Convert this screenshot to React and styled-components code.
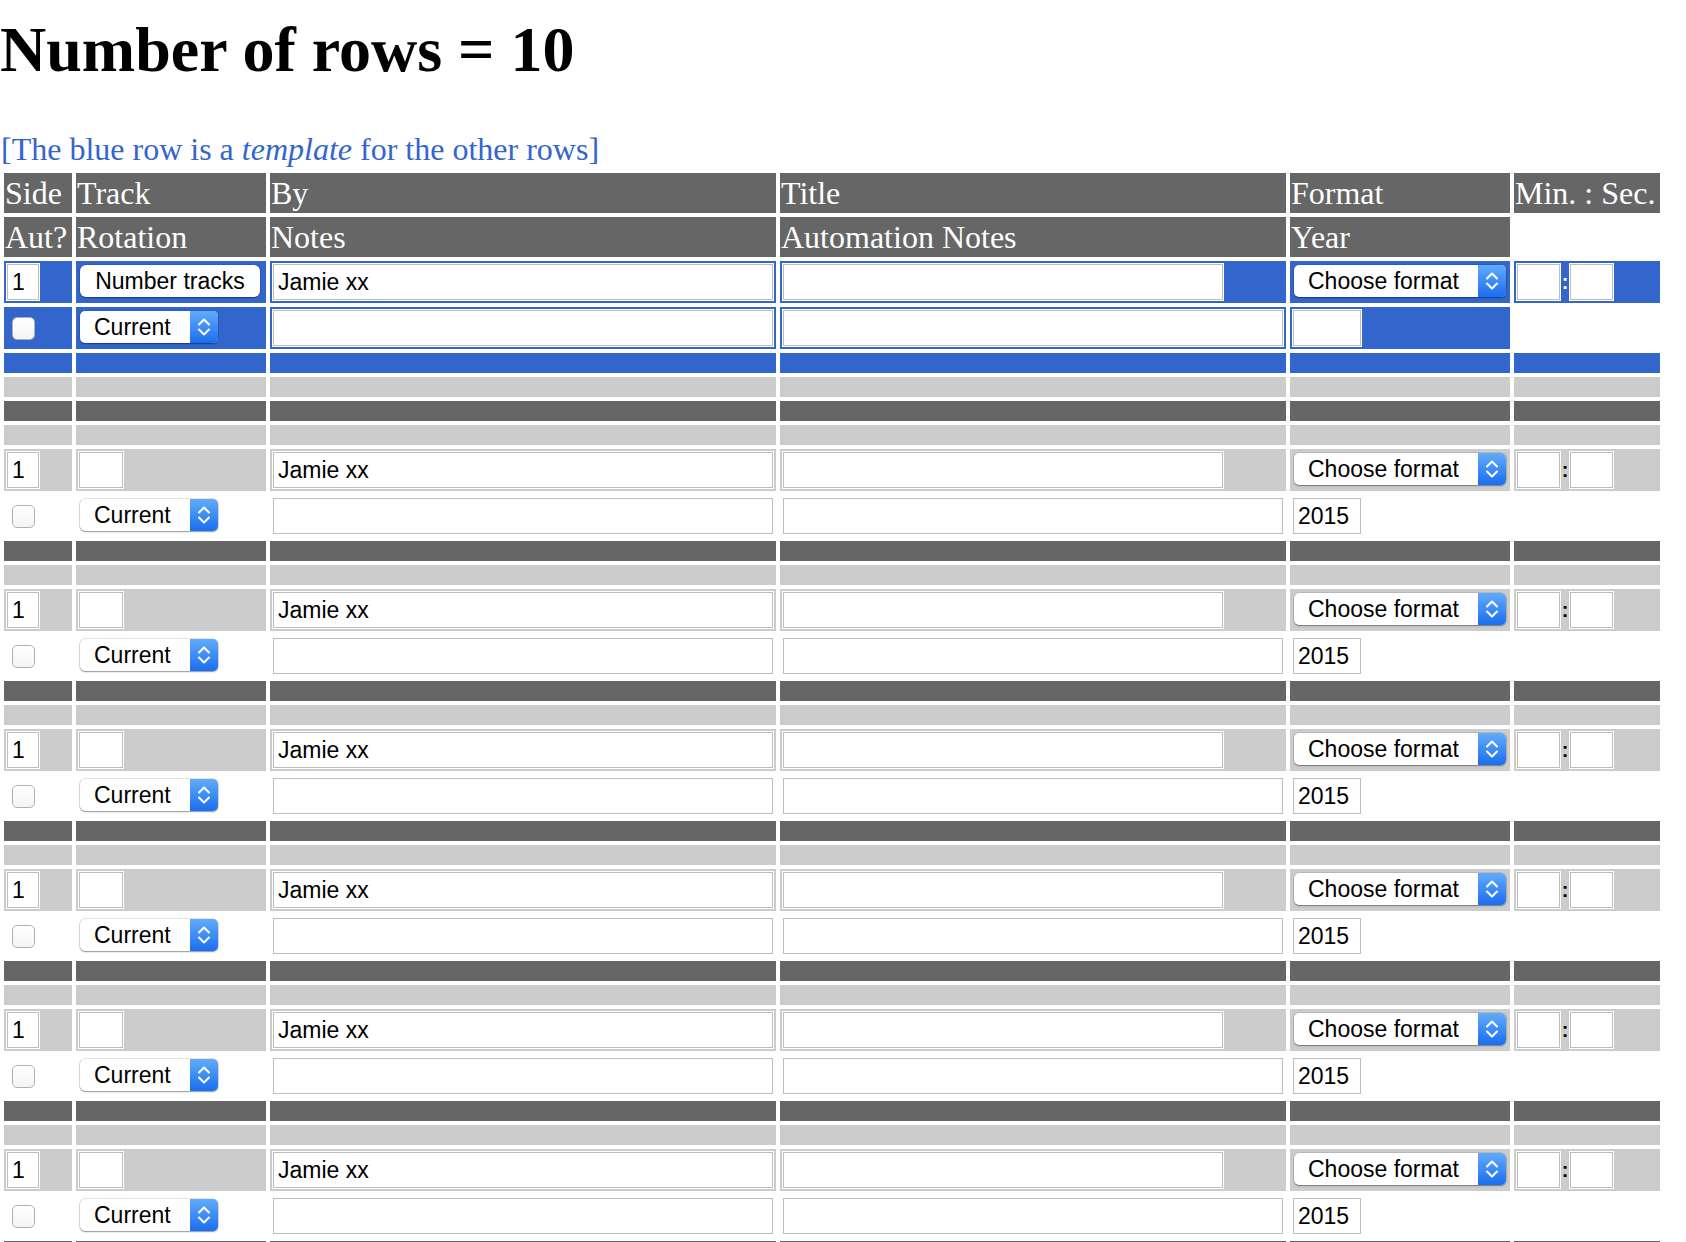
/**
 *
 * TrackRows
 *
 */

import React from 'react';
import styled, { createGlobalStyle } from 'styled-components';

const colors = {
  head: '#666666',
  light: '#cccccc',
  blue: '#3366cc',
  field: '#bdbdbd',
};

const tones = {
  head: colors.head,
  dark: colors.head,
  light: colors.light,
  blue: colors.blue,
  none: 'transparent',
};

const heights = { head: 40, field: 42, bar: 20 };

const GlobalStyle = createGlobalStyle`
  body {
    margin: 0;
    background: #fff;
    font-family: "Liberation Serif", "Times New Roman", serif;
  }
`;

const Heading = styled.h1`
  margin: 13px 0 44px;
  font-size: 64px;
  font-weight: bold;
  line-height: normal;
  color: #000;
`;

const Note = styled.p`
  margin: 0;
  padding: 0 0 1px 1px;
  font-size: 32px;
  line-height: normal;
  color: ${colors.blue};
`;

const Grid = styled.div`
  display: grid;
  grid-template-columns: 68px 190px 506px 506px 220px 146px;
  gap: 4px;
  padding: 4px;
  width: max-content;
`;

const Cell = styled.div`
  display: flex;
  align-items: center;
  box-sizing: border-box;
  height: ${p => heights[p.$size || 'field']}px;
  padding: 0 2px;
  background: ${p => tones[p.$tone || 'none']};
  color: ${p => (p.$tone === 'blue' ? '#fff' : '#000')};
`;

const HeadCell = styled(Cell)`
  padding: 0 1px;
  color: #fff;
  font-size: 32px;
  line-height: 38px;
  white-space: nowrap;
`;

const Field = styled.input`
  box-sizing: border-box;
  flex: ${p => (p.$w ? '0 0 auto' : '1 1 auto')};
  width: ${p => (p.$w ? `${p.$w}px` : 'auto')};
  min-width: 0;
  height: 36px;
  margin: 0 1px;
  padding: 0 4px;
  border: 1px solid ${colors.field};
  border-radius: 0;
  box-shadow: 0 0 0 1px #fff;
  background: #fff;
  font-family: "Liberation Sans", Arial, sans-serif;
  font-size: 23px;
  color: #000;
  outline: none;
`;

const PushButton = styled.button`
  box-sizing: border-box;
  width: 180px;
  height: 32px;
  margin: 0 2px 2px;
  padding: 0;
  border: none;
  border-radius: 6px;
  background: #fff;
  box-shadow: 0 0 0 0.5px rgba(0, 0, 0, 0.2), 0 1px 1.5px rgba(0, 0, 0, 0.35);
  font-family: "Liberation Sans", Arial, sans-serif;
  font-size: 23px;
  color: #000;
`;

const PopUp = styled.div`
  display: flex;
  align-items: stretch;
  box-sizing: border-box;
  width: ${p => p.$w}px;
  height: 32px;
  margin: 0 2px 2px;
  border-radius: 5px;
  overflow: hidden;
  background: #fff;
  box-shadow: 0 0 0 0.5px rgba(0, 0, 0, 0.2), 0 1px 1.5px rgba(0, 0, 0, 0.35);
  font-family: "Liberation Sans", Arial, sans-serif;
  font-size: 23px;
  color: #000;
`;

const PopLabel = styled.span`
  flex: 1;
  display: flex;
  align-items: center;
  padding-left: 14px;
  white-space: nowrap;
`;

const PopArrows = styled.span`
  flex: 0 0 28px;
  display: flex;
  align-items: center;
  justify-content: center;
  background: linear-gradient(#62abfb, #1a6ef0);
`;

const Check = styled.input`
  appearance: none;
  box-sizing: border-box;
  width: 23px;
  height: 23px;
  margin: 0 0 0 6px;
  border: 1px solid #b0b0b0;
  border-radius: 5px;
  background: linear-gradient(#fff, #f4f4f4);
`;

const Colon = styled.span`
  width: 8px;
  text-align: center;
  font-family: "Liberation Sans", Arial, sans-serif;
  font-size: 20px;
  font-weight: bold;
`;

const Chevrons = () => (
  <svg width="28" height="32" viewBox="0 0 28 32">
    <g fill="none" stroke="#fff" strokeWidth="2" strokeLinecap="round" strokeLinejoin="round">
      <polyline points="9,13.5 14,8.5 19,13.5" />
      <polyline points="9,18.5 14,23.5 19,18.5" />
    </g>
  </svg>
);

const Select = ({ label, width }) => (
  <PopUp $w={width}>
    <PopLabel>{label}</PopLabel>
    <PopArrows>
      <Chevrons />
    </PopArrows>
  </PopUp>
);

const Bars = ({ tone }) =>
  [0, 1, 2, 3, 4, 5].map(i => <Cell key={i} $size="bar" $tone={tone} />);

const Duration = () => (
  <>
    <Field $w={43} />
    <Colon>:</Colon>
    <Field $w={43} />
  </>
);

function Record({ template }) {
  const tone = template ? 'blue' : 'light';
  const back = template ? 'blue' : 'none';
  return (
    <>
      <Cell $tone={tone}>
        <Field $w={32} defaultValue="1" />
      </Cell>
      <Cell $tone={tone}>
        {template ? <PushButton>Number tracks</PushButton> : <Field $w={44} />}
      </Cell>
      <Cell $tone={tone}>
        <Field defaultValue="Jamie xx" />
      </Cell>
      <Cell $tone={tone}>
        <Field $w={440} />
      </Cell>
      <Cell $tone={tone}>
        <Select label="Choose format" width={213} />
      </Cell>
      <Cell $tone={tone}>
        <Duration />
      </Cell>

      <Cell $tone={back}>
        <Check type="checkbox" />
      </Cell>
      <Cell $tone={back}>
        <Select label="Current" width={138} />
      </Cell>
      <Cell $tone={back}>
        <Field />
      </Cell>
      <Cell $tone={back}>
        <Field />
      </Cell>
      <Cell $tone={back}>
        <Field $w={68} defaultValue={template ? '' : '2015'} />
      </Cell>
      <Cell />

      <Bars tone={template ? 'blue' : 'dark'} />
      <Bars tone="light" />
    </>
  );
}

const records = Array.from({ length: 10 }, (_, i) => i);

export default function App() {
  return (
    <>
      <GlobalStyle />
      <Heading>Number of rows = 10</Heading>
      <Note>
        [The blue row is a <i>template</i> for the other rows]
      </Note>
      <Grid>
        <HeadCell $size="head" $tone="head">Side</HeadCell>
        <HeadCell $size="head" $tone="head">Track</HeadCell>
        <HeadCell $size="head" $tone="head">By</HeadCell>
        <HeadCell $size="head" $tone="head">Title</HeadCell>
        <HeadCell $size="head" $tone="head">Format</HeadCell>
        <HeadCell $size="head" $tone="head">Min. : Sec.</HeadCell>
        <HeadCell $size="head" $tone="head">Aut?</HeadCell>
        <HeadCell $size="head" $tone="head">Rotation</HeadCell>
        <HeadCell $size="head" $tone="head">Notes</HeadCell>
        <HeadCell $size="head" $tone="head">Automation Notes</HeadCell>
        <HeadCell $size="head" $tone="head">Year</HeadCell>
        <HeadCell $size="head" />

        <Record template />
        <Bars tone="dark" />
        <Bars tone="light" />
        {records.map(i => (
          <Record key={i} />
        ))}
      </Grid>
    </>
  );
}
